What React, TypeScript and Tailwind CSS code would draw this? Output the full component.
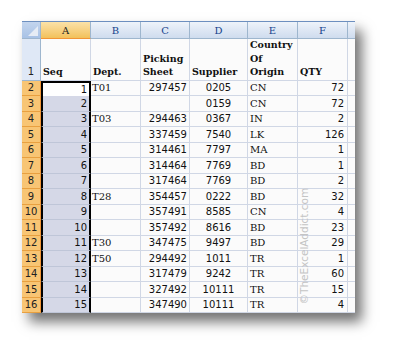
import React from "react";

const rows: [string, string, string, string, string][] = [
  ["T01", "297457", "0205", "CN", "72"],
  ["", "", "0159", "CN", "72"],
  ["T03", "294463", "0367", "IN", "2"],
  ["", "337459", "7540", "LK", "126"],
  ["", "314461", "7797", "MA", "1"],
  ["", "314464", "7769", "BD", "1"],
  ["", "317464", "7769", "BD", "2"],
  ["T28", "354457", "0222", "BD", "32"],
  ["", "357491", "8585", "CN", "4"],
  ["", "357492", "8616", "BD", "23"],
  ["T30", "347475", "9497", "BD", "29"],
  ["T50", "294492", "1011", "TR", "1"],
  ["", "317479", "9242", "TR", "60"],
  ["", "327492", "10111", "TR", "15"],
  ["", "347490", "10111", "TR", "4"],
];

const sans = "font-['DejaVu_Sans',sans-serif]";
const serif = "font-['DejaVu_Serif',serif]";

const colHdr =
  "h-[17px] flex items-center justify-center border-r border-b border-[#9eb6ce] bg-gradient-to-b from-[#eef3fa] to-[#cfdcee] text-[10px] text-[#15428b] " +
  serif;

export default function App() {
  return (
    <div className="w-[397px] h-[355px] bg-white pl-[22px] pt-[21px]">
      <div className="relative w-[333px] bg-[#fbfbfb] shadow-[7px_9px_12px_rgba(0,0,0,0.55)] border-t border-[#6d8fbf]">
        <div className="grid grid-cols-[19px_50px_50px_49px_58px_50px_50px_7px]">
          {/* column header row */}
          <div className="h-[17px] border-r border-b border-[#9eb6ce] bg-gradient-to-b from-[#c3d5ee] to-[#a8c2e6] relative">
            <div className="absolute right-[2px] bottom-[2px] w-0 h-0 border-l-[10px] border-l-transparent border-b-[10px] border-b-[#e6ecf5]" />
          </div>
          <div className={"h-[17px] flex items-center justify-center border-r border-r-[#9eb6ce] border-b border-b-[#f29536] bg-gradient-to-b from-[#fbe2a8] to-[#f2c15a] text-[10px] text-[#222] " + serif}>A</div>
          <div className={colHdr}>B</div>
          <div className={colHdr}>C</div>
          <div className={colHdr}>D</div>
          <div className={colHdr}>E</div>
          <div className={colHdr}>F</div>
          <div className="h-[17px] border-b border-[#9eb6ce] bg-gradient-to-b from-[#eef3fa] to-[#cfdcee]" />

          {/* row 1 */}
          <div className={"h-[41.5px] flex items-end justify-center pb-[1px] border-r border-b border-[#9eb6ce] bg-[#dfe8f6] text-[10px] text-[#222] " + sans}>1</div>
          {[
            ["Seq"],
            ["Dept."],
            ["Picking", "Sheet"],
            ["Supplier"],
            ["Country", "Of", "Origin"],
            ["QTY"],
          ].map((lines, i) => (
            <div
              key={i}
              className={
                "h-[41.5px] flex flex-col justify-end pl-[2px] pb-[1px] border-r border-b border-[#d0d7e5] text-[9.5px] leading-[13.5px] font-bold text-[#111] " +
                serif
              }
            >
              {lines.map((l) => (
                <span key={l}>{l}</span>
              ))}
            </div>
          ))}
          <div className="h-[41.5px] border-b border-[#d0d7e5]" />

          {rows.map((r, i) => {
            const n = i + 1;
            const first = i === 0;
            return (
              <React.Fragment key={i}>
                <div className={"h-[15.5px] flex items-center justify-center border-r border-b border-r-[#f29536] border-b-[#e8a040] bg-[#f8c574] text-[10px] text-[#222] " + sans}>
                  {n + 1}
                </div>
                <div
                  className={
                    "h-[15.5px] flex items-center justify-end pr-[2px] border-l-2 border-r-2 border-l-black border-r-black text-[10px] text-[#111] " +
                    sans +
                    (first ? " border-t-2 border-t-black bg-white" : " border-b border-b-[#bfc6d8] bg-[#d5d8e7]")
                  }
                >
                  {n}
                </div>
                <div className={"h-[15.5px] flex items-center pl-[1px] border-r border-b border-[#d0d7e5] text-[10px] text-[#111] " + serif}>{r[0]}</div>
                <div className={"h-[15.5px] flex items-center justify-end pr-[2px] border-r border-b border-[#d0d7e5] text-[10px] text-[#111] " + sans}>{r[1]}</div>
                <div className={"h-[15.5px] flex items-center justify-center border-r border-b border-[#d0d7e5] text-[10px] text-[#111] " + sans}>{r[2]}</div>
                <div className={"h-[15.5px] flex items-center pl-[2px] border-r border-b border-[#d0d7e5] text-[10px] text-[#111] " + serif}>{r[3]}</div>
                <div className={"h-[15.5px] flex items-center justify-end pr-[3px] border-r border-b border-[#d0d7e5] text-[10px] text-[#111] " + sans}>{r[4]}</div>
                <div className="h-[15.5px] border-b border-[#d0d7e5]" />
              </React.Fragment>
            );
          })}
        </div>
        {/* watermark */}
        <div
          className={
            "absolute left-[226px] top-[220px] -rotate-90 origin-center whitespace-nowrap text-[10.5px] leading-[13px] text-[#c4c4c4] w-[112px] text-center " +
            sans
          }
        >
          ©TheExcelAddict.com
        </div>
      </div>
    </div>
  );
}
